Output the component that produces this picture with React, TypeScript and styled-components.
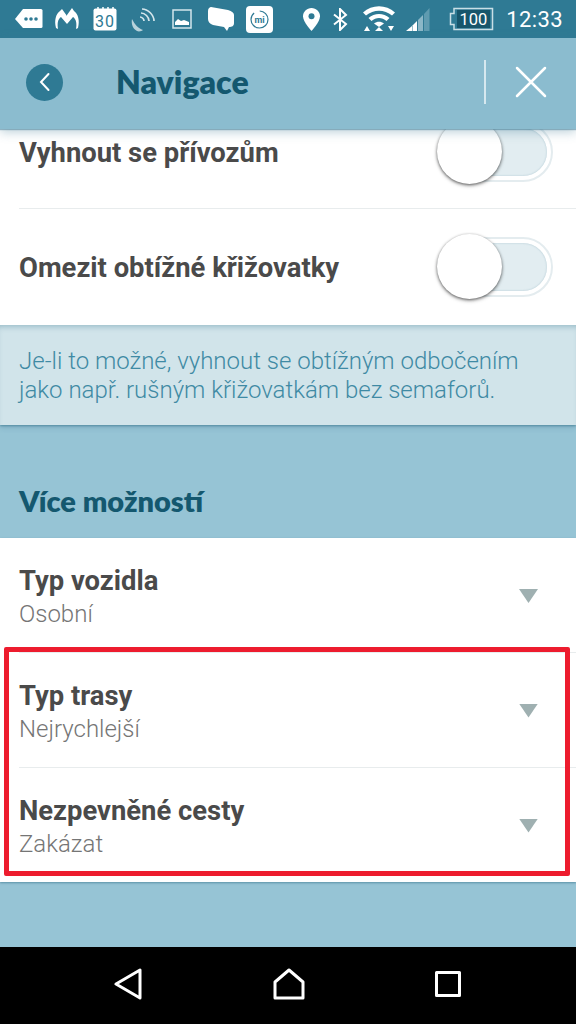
import styled, { createGlobalStyle } from "styled-components";

const GlobalStyle = createGlobalStyle`
  html, body {
    margin: 0;
    padding: 0;
    background: #000;
  }
  * {
    box-sizing: border-box;
  }
`;

const Screen = styled.div`
  width: 576px;
  height: 1024px;
  display: flex;
  flex-direction: column;
  overflow: hidden;
  background: #96c4d5;
  font-family: Roboto, "Liberation Sans", sans-serif;
`;

const StatusBar = styled.div`
  height: 38px;
  flex: none;
  display: flex;
  align-items: center;
  justify-content: space-between;
  padding: 0 13px 0 15px;
  background: #2f7a94;
  color: #fff;
`;

const StatusGroup = styled.div<{ $gap: number }>`
  display: flex;
  align-items: center;
  gap: ${(p) => p.$gap}px;
`;

const Glyph = styled.svg<{ $shift?: number }>`
  flex: none;
  margin-left: ${(p) => p.$shift ?? 0}px;
`;

const Clock = styled.span`
  font-size: 22px;
  letter-spacing: 0.4px;
  margin-left: 1px;
`;

const Header = styled.header`
  position: relative;
  z-index: 2;
  height: 91px;
  flex: none;
  display: flex;
  align-items: center;
  padding: 0 29px 3px 26px;
  background: #8bbccf;
  box-shadow: 0 1px 1px rgba(60, 120, 145, 0.5), 0 3px 10px rgba(60, 120, 145, 0.35);
`;

const BackButton = styled.div`
  width: 37px;
  height: 37px;
  border-radius: 50%;
  display: flex;
  align-items: center;
  justify-content: center;
  background: #2f7a94;
  flex: none;
`;

const Title = styled.h1`
  flex: 1;
  margin: 0 0 2px 53px;
  font-family: Lato, sans-serif;
  font-size: 32px;
  font-weight: 800;
  color: #14586f;
`;

const HeaderDivider = styled.div`
  width: 2px;
  height: 44px;
  background: #d6e8ef;
  margin-right: 29px;
`;

const Scroller = styled.main`
  flex: 1;
  min-height: 0;
  overflow: hidden;
`;

const Rows = styled.section<{ $clip?: number }>`
  position: relative;
  margin-top: ${(p) => (p.$clip ? `-${p.$clip}px` : 0)};
  background: #fff;
`;

const ToggleRow = styled.div`
  height: 113px;
  display: flex;
  align-items: center;
  justify-content: space-between;
  padding: 1px 23px 0 19px;
  & + & {
    height: 117px;
    background: linear-gradient(#e8eced, #e8eced) 19px 0 / 100% 1px no-repeat;
  }
`;

const RowLabel = styled.div`
  font-size: 27.4px;
  line-height: 32px;
  font-weight: 700;
  color: #4a4a4a;
`;

const ToggleLabel = styled(RowLabel)`
  padding-top: 1px;
`;

const Switch = styled.div`
  position: relative;
  width: 116px;
  height: 60px;
  border-radius: 30px;
  border: 2px solid #e4ecef;
  padding: 4px;
  background: #fff;
  flex: none;
`;

const SwitchTrack = styled.div`
  height: 100%;
  border-radius: 24px;
  background: #e2edf1;
  box-shadow: inset 0 0 2px rgba(90, 140, 160, 0.4);
`;

const SwitchKnob = styled.div`
  position: absolute;
  left: -2px;
  top: -5px;
  width: 65px;
  height: 65px;
  border-radius: 50%;
  background: #fff;
  box-shadow: 0 1px 3px rgba(0, 0, 0, 0.55), 0 2px 4px rgba(0, 0, 0, 0.2);
`;

const Hint = styled.p`
  height: 100px;
  margin: 0;
  padding: 22px 19px 0;
  font-size: 24px;
  font-weight: 300;
  line-height: 29px;
  color: #3f8aa4;
  background: #d1e4ea;
  box-shadow: inset 0 5px 6px -4px rgba(60, 120, 145, 0.45), 0 1px 2px rgba(50, 110, 135, 0.6), 0 3px 5px rgba(50, 110, 135, 0.2);
`;

const SectionTitle = styled.h2`
  height: 113px;
  margin: 0;
  padding: 60px 19px 0;
  font-family: Lato, sans-serif;
  font-size: 29px;
  line-height: 32px;
  font-weight: 800;
  color: #14586f;
`;

const SelectRow = styled.div`
  height: 115px;
  display: flex;
  align-items: center;
  justify-content: space-between;
  padding: 2px 38px 0 19px;
  &:first-child {
    height: 114px;
  }
  & + & {
    background: linear-gradient(#e8eced, #e8eced) 19px 0 / 100% 1px no-repeat;
  }
`;

const SelectText = styled.div`
  display: flex;
  flex-direction: column;
  gap: 2px;
  padding-top: 2px;
`;

const SelectValue = styled.div`
  font-size: 24px;
  font-weight: 300;
  line-height: 30px;
  color: #757575;
`;

const Arrow = styled.div`
  width: 19px;
  height: 14px;
  background: #9fb0b1;
  clip-path: polygon(0 0, 100% 0, 50% 100%);
`;

const Highlight = styled.div`
  position: absolute;
  left: 4px;
  right: 6px;
  top: 109px;
  height: 229px;
  border: 5px solid #ed1c2e;
  border-radius: 2px;
  pointer-events: none;
`;

const ListShadow = styled.div`
  box-shadow: 0 1px 2px rgba(50, 110, 135, 0.6);
`;

const NavBar = styled.nav`
  height: 77px;
  flex: none;
  display: flex;
  align-items: center;
  justify-content: space-between;
  padding: 0 115px 4px 114px;
  background: #000;
`;

const selectItems = [
  { label: "Typ vozidla", value: "Osobní" },
  { label: "Typ trasy", value: "Nejrychlejší" },
  { label: "Nezpevněné cesty", value: "Zakázat" },
];

const toggleItems = ["Vyhnout se přívozům", "Omezit obtížné křižovatky"];

function StatusIcons() {
  return (
    <StatusGroup $gap={14}>
      <Glyph width="28" height="22" viewBox="0 0 28 22" fill="#fff">
        <path d="M8 1h18a1.500 1.500 0 0 1 1.500 1.500v16a1.500 1.500 0 0 1-1.500 1.500H8L0 11z" />
        <circle cx="11" cy="11" r="1.800" fill="#2f7a94" />
        <circle cx="16" cy="11" r="1.800" fill="#2f7a94" />
        <circle cx="21" cy="11" r="1.800" fill="#2f7a94" />
      </Glyph>
      <Glyph $shift={-3} width="26" height="24" viewBox="0 0 26 24" fill="#fff">
        <path d="M13 9 8 2 6 4C2 7 0 13 2 21l2 1c-1-6 0-10 3-12l6 7 6-7c3 2 4 6 3 12l2-1c2-8 0-14-4-17l-2-3-5 7z" />
      </Glyph>
      <Glyph $shift={-1} width="24" height="24" viewBox="0 0 24 24">
        <rect x="0.500" y="1.500" width="23" height="22" rx="2" fill="#fff" />
        <path d="M5 0v4M10 0v4M15 0v4M20 0v4" stroke="#fff" strokeWidth="1.500" />
        <text x="12" y="20" textAnchor="middle" fontFamily="Roboto" fontSize="16" fontWeight="400" letterSpacing="1" fill="#2f7a94">
          30
        </text>
      </Glyph>
      <Glyph $shift={-1} width="26" height="27" viewBox="0 0 26 27" fill="none" stroke="#d4e6ec" strokeWidth="1.700">
        <path d="M2 13c3 6 6 9 11 11-1 1-4 2-6 1-4-2-6-7-5-12z" fill="#b8d2db" stroke="none" />
        <path d="M10 11c2 0 4 2 4 4M11 7c4 0 8 4 8 8M12 3c6 0 12 6 12 12" />
      </Glyph>
      <Glyph $shift={2} width="20" height="20" viewBox="0 0 20 20">
        <rect x="1" y="1" width="18" height="18" fill="#2f7a94" stroke="#d4e6ec" strokeWidth="1.500" />
        <path d="M3 16v-3l3-3 3 2 3-1 5 2v3z" fill="#fff" />
      </Glyph>
      <Glyph $shift={1} width="27" height="26" viewBox="0 0 27 26" fill="#fff">
        <path d="M4 1 21 4c4 1 6 3 6 5v8c0 3-2 4-5 4l-2 4-3-4-11-2c-3-1-5-3-5-6V5c0-3 2-4 3-4z" />
      </Glyph>
      <Glyph $shift={-2} width="27" height="27" viewBox="0 0 27 27">
        <rect width="27" height="27" rx="4" fill="#fff" />
        <circle cx="13.500" cy="13.500" r="8.500" fill="none" stroke="#2f7a94" strokeWidth="1.200" strokeDasharray="34 6" />
        <text x="13.500" y="16.500" textAnchor="middle" fontFamily="Roboto" fontSize="9" fontWeight="700" fill="#2f7a94">
          mi
        </text>
      </Glyph>
    </StatusGroup>
  );
}

function SystemIcons() {
  return (
    <StatusGroup $gap={11}>
      <Glyph width="17" height="23" viewBox="0 0 17 23">
        <path d="M8.500 0C3.800 0 0 3.700 0 8.300 0 14 8.500 23 8.500 23S17 14 17 8.300C17 3.700 13.200 0 8.500 0z" fill="#fff" />
        <circle cx="8.500" cy="8.300" r="3" fill="#2f7a94" />
      </Glyph>
      <Glyph $shift={2} width="15" height="23" viewBox="0 0 15 23" fill="none" stroke="#fff" strokeWidth="2">
        <path d="M1 6.500 13 16l-6 6V1l6 6L1 16.500" />
      </Glyph>
      <Glyph $shift={4} width="32" height="26" viewBox="0 0 32 26" fill="#fff">
        <path d="M0 6.500C9-2 23-2 32 6.500l-3 3C21.500 3 10.500 3 3 9.500z" />
        <path d="M5.500 12C11.500 6.500 20.500 6.500 26.500 12l-3 3c-4.500-4-10.500-4-15 0z" />
        <path d="M11 17.500c3-2.500 7-2.500 10 0l-5 3.500z" />
        <path d="M4 20l3 5H1zM16 21l4 4h-8zM25 20h6l-3 5z" />
      </Glyph>
      <Glyph width="24" height="24" viewBox="0 0 24 24">
        <path d="M0 24l6-5v5z" fill="#fff" />
        <path d="M6.500 18.500 11 14v10H6.500z" fill="#fff" />
        <path d="M12 13l5-5v16h-5z" fill="#8bb7c7" />
        <path d="M18 7l5.500-6v23H18z" fill="#5f9bb0" />
      </Glyph>
      <Glyph $shift={8} width="45" height="24" viewBox="0 0 45 24">
        <path d="M5 1.500h38.500v21H5v-5H1.500v-11H5z" fill="none" stroke="#c9dfe6" strokeWidth="1.500" />
        <rect x="8" y="3" width="33" height="18" fill="#17556b" />
        <text x="24.500" y="18" textAnchor="middle" fontFamily="Roboto" fontSize="16.500" fill="#fff">
          100
        </text>
      </Glyph>
      <Clock>12:33</Clock>
    </StatusGroup>
  );
}

export default function App() {
  return (
    <>
      <GlobalStyle />
      <Screen>
        <StatusBar>
          <StatusIcons />
          <SystemIcons />
        </StatusBar>
        <Header>
          <BackButton>
            <svg width="14" height="20" viewBox="0 0 14 20" fill="none" stroke="#fff" strokeWidth="2" strokeLinecap="round">
              <path d="M10.500 2 3 10l7.500 8" />
            </svg>
          </BackButton>
          <Title>Navigace</Title>
          <HeaderDivider />
          <svg width="32" height="32" viewBox="0 0 32 32" fill="none" stroke="#fff" strokeWidth="2.500" strokeLinecap="round">
            <path d="M2 2l28 28M30 2 2 30" />
          </svg>
        </Header>
        <Scroller>
          <Rows $clip={34}>
            {toggleItems.map((label) => (
              <ToggleRow key={label}>
                <ToggleLabel>{label}</ToggleLabel>
                <Switch>
                  <SwitchTrack />
                  <SwitchKnob />
                </Switch>
              </ToggleRow>
            ))}
          </Rows>
          <Hint>
            Je-li to možné, vyhnout se obtížným odbočením
            <br />
            jako např. rušným křižovatkám bez semaforů.
          </Hint>
          <SectionTitle>Více možností</SectionTitle>
          <ListShadow>
            <Rows>
              {selectItems.map((item) => (
                <SelectRow key={item.label}>
                  <SelectText>
                    <RowLabel>{item.label}</RowLabel>
                    <SelectValue>{item.value}</SelectValue>
                  </SelectText>
                  <Arrow />
                </SelectRow>
              ))}
              <Highlight />
            </Rows>
          </ListShadow>
        </Scroller>
        <NavBar>
          <svg width="28" height="32" viewBox="0 0 28 32" fill="none" stroke="#fff" strokeWidth="3" strokeLinejoin="round">
            <path d="M26 2v28L2 16z" />
          </svg>
          <svg width="32" height="32" viewBox="0 0 32 32" fill="none" stroke="#fff" strokeWidth="3" strokeLinejoin="round">
            <path d="M16 2 30 14v16H2V14z" />
          </svg>
          <svg width="26" height="26" viewBox="0 0 26 26" fill="none" stroke="#fff" strokeWidth="3" strokeLinejoin="round">
            <path d="M1.500 1.500h23v23h-23z" />
          </svg>
        </NavBar>
      </Screen>
    </>
  );
}
